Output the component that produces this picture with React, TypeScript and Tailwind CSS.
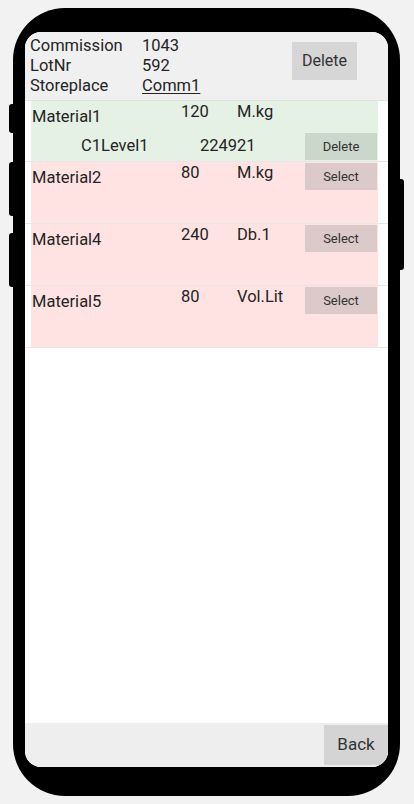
const ROWS = [
  { name: "Material2", qty: "80", unit: "M.kg" },
  { name: "Material4", qty: "240", unit: "Db.1" },
  { name: "Material5", qty: "80", unit: "Vol.Lit" },
];

function SideButtons() {
  return (
    <>
      <div className="absolute left-[-4px] top-[96px] h-[29px] w-[5px] rounded-l-[3px] bg-black" />
      <div className="absolute left-[-4px] top-[154px] h-[54px] w-[5px] rounded-l-[3px] bg-black" />
      <div className="absolute left-[-4px] top-[225px] h-[54px] w-[5px] rounded-l-[3px] bg-black" />
      <div className="absolute right-[-4px] top-[171px] h-[91px] w-[5px] rounded-r-[3px] bg-black" />
    </>
  );
}

export default function App() {
  return (
    <div
      className="w-[414px] h-[804px] bg-[#f2f2f2] pl-[13px] pt-[8px] text-[#242424]"
      style={{ fontFamily: "Roboto, 'Liberation Sans', sans-serif" }}
    >
      <div className="relative w-[387px] h-[788px] rounded-[52px] bg-black pt-[24px] pb-[29px] px-[12px]">
        <SideButtons />
        <div className="h-full rounded-[16px] overflow-hidden bg-white flex flex-col">
          {/* Header */}
          <div className="h-[69px] shrink-0 bg-[#f0f0f0] border-b border-[#e2e2e2] flex justify-between">
            <div className="pl-[5px] pt-[4px] text-[16.5px] leading-[20px]">
              <div className="flex">
                <span className="w-[112px]">Commission</span>
                <span>1043</span>
              </div>
              <div className="flex">
                <span className="w-[112px]">LotNr</span>
                <span>592</span>
              </div>
              <div className="flex">
                <span className="w-[112px]">Storeplace</span>
                <span className="underline underline-offset-2">Comm1</span>
              </div>
            </div>
            <button
              type="button"
              className="mt-[10px] mr-[31px] w-[65px] h-[38px] bg-[#d6d6d6] text-[16px] text-[#333]"
            >
              Delete
            </button>
          </div>

          {/* Selected material */}
          <div className="h-[61px] shrink-0 border-b border-[#e6e6e6] pl-[6px] pr-[10px]">
            <div className="h-full bg-[#e4f1e4] text-[16.5px]">
              <div className="flex h-[28px]">
                <span className="w-[150px] pl-[1px] pt-[6px] leading-[20px]">Material1</span>
                <span className="w-[56px] pt-[1px] leading-[20px]">120</span>
                <span className="pt-[1px] leading-[20px]">M.kg</span>
              </div>
              <div className="flex items-center mt-[4px]">
                <span className="w-[169px] pl-[50px]">C1Level1</span>
                <span className="flex-1">224921</span>
                <button
                  type="button"
                  className="mr-[1px] w-[72px] h-[27px] bg-[#cad7ca] text-[13px] text-[#333]"
                >
                  Delete
                </button>
              </div>
            </div>
          </div>

          {ROWS.map((r) => (
            <div
              key={r.name}
              className="h-[62px] shrink-0 border-b border-[#e6e6e6] pl-[6px] pr-[10px]"
            >
              <div className="h-full bg-[#ffe3e3] flex items-start text-[16.5px]">
                <span className="w-[150px] pl-[1px] pt-[6px] leading-[20px]">{r.name}</span>
                <span className="w-[56px] pt-[1px] leading-[20px]">{r.qty}</span>
                <span className="flex-1 pt-[1px] leading-[20px]">{r.unit}</span>
                <button
                  type="button"
                  className="mt-[1px] mr-[1px] w-[72px] h-[27px] bg-[#dccaca] text-[13px] text-[#333]"
                >
                  Select
                </button>
              </div>
            </div>
          ))}

          <div className="flex-1 bg-white" />

          {/* Footer */}
          <div className="h-[44px] shrink-0 bg-[#eeeeee] flex justify-end items-start pt-[2px]">
            <button
              type="button"
              className="w-[64px] h-[40px] bg-[#d4d4d4] text-[17px] text-[#333]"
            >
              Back
            </button>
          </div>
        </div>
      </div>
    </div>
  );
}
